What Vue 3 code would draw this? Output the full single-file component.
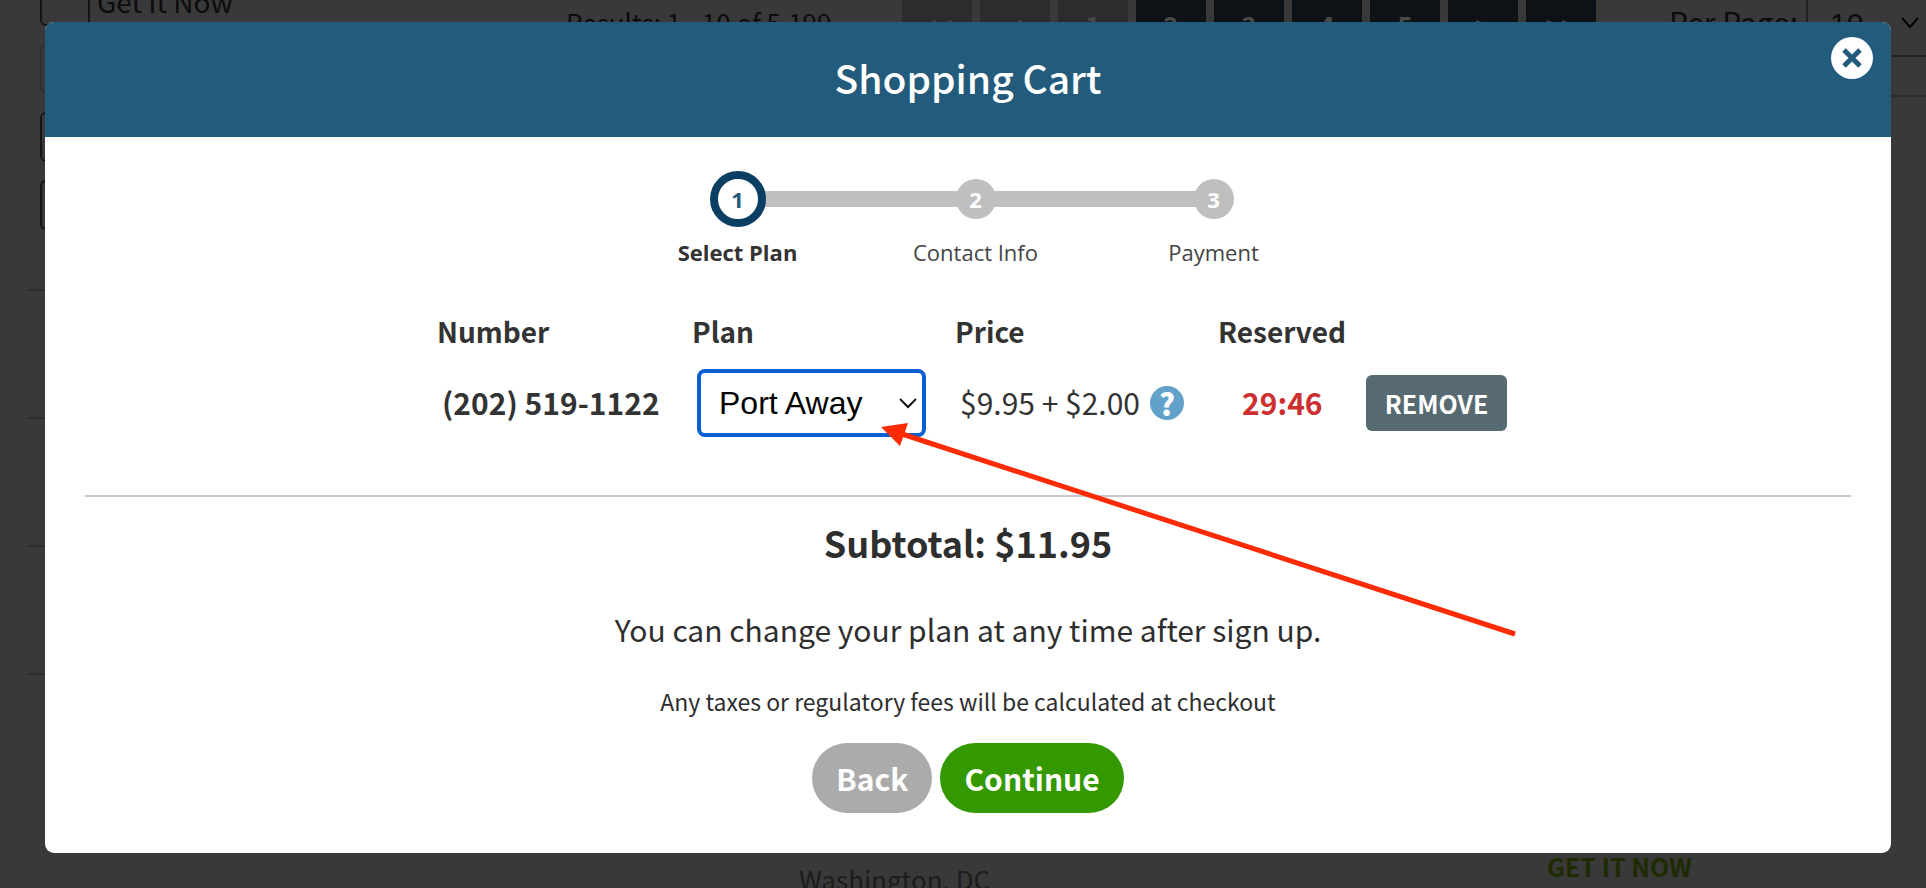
<script setup>
import { ref } from 'vue'

const steps = ['Select Plan', 'Contact Info', 'Payment']
const pages = [
  { label: '<<', off: true },
  { label: '<', off: true },
  { label: '1', off: true },
  { label: '2' },
  { label: '3' },
  { label: '4' },
  { label: '5' },
  { label: '>' },
  { label: '>>' },
]
const filters = ['Area code', 'Digits', 'City']
const plan = ref('Port Away')
const perPage = ref('10')
</script>

<template>
  <div class="page">
    <div class="backdrop">
      <aside class="filters">
        <div class="field split">
          <span class="addon"></span>
          <input type="text" value="Get It Now" aria-label="Search type" />
        </div>
        <input
          v-for="(name, i) in filters"
          :key="name"
          type="text"
          class="field"
          :class="{ faint: i === 0 }"
          :aria-label="name"
        />
        <div class="rules">
          <hr v-for="n in 4" :key="n" />
        </div>
      </aside>
      <main class="results">
        <div class="toolbar">
          <span class="count">Results: 1 - 10 of 5,199</span>
          <nav class="pager">
            <button v-for="p in pages" :key="p.label" type="button" :class="{ off: p.off }">{{ p.label }}</button>
          </nav>
          <div class="per-page">
            <label for="per-page">Per Page:</label>
            <div class="per-box">
              <select id="per-page" v-model="perPage">
                <option>10</option>
              </select>
              <svg width="18" height="12" viewBox="0 0 18 12" aria-hidden="true">
                <path d="M1 1l8 9 8-9" fill="none" stroke="#000" stroke-width="2" />
              </svg>
            </div>
          </div>
        </div>
        <hr class="table-rule" />
        <div class="result">
          <span class="place">Washington, DC</span>
          <a href="#" class="get">GET IT NOW</a>
        </div>
      </main>
    </div>

    <div class="overlay">
      <section class="modal" role="dialog" aria-labelledby="cart-title">
        <header class="modal-head">
          <h1 id="cart-title">Shopping Cart</h1>
          <button type="button" class="close" aria-label="Close">
            <svg width="22" height="22" viewBox="0 0 22 22" aria-hidden="true">
              <path d="M3 3l16 16M19 3L3 19" stroke="#235b7c" stroke-width="5" />
            </svg>
          </button>
        </header>

        <div class="modal-body">
          <ol class="steps">
            <li v-for="(s, i) in steps" :key="s" :class="{ active: i === 0 }">
              <div class="track"><span class="dot">{{ i + 1 }}</span></div>
              <span class="step-label">{{ s }}</span>
            </li>
          </ol>

          <div class="cart">
            <table>
              <colgroup>
                <col class="c-number" /><col class="c-plan" /><col class="c-price" /><col class="c-time" /><col />
              </colgroup>
              <thead>
                <tr>
                  <th>Number</th>
                  <th>Plan</th>
                  <th>Price</th>
                  <th>Reserved</th>
                  <td></td>
                </tr>
              </thead>
              <tbody>
                <tr>
                  <td class="number">(202) 519-1122</td>
                  <td>
                    <div class="plan">
                      <select v-model="plan" aria-label="Plan">
                        <option>Port Away</option>
                      </select>
                      <svg width="18" height="12" viewBox="0 0 18 12" aria-hidden="true">
                        <path d="M1 2l8 8 8-8" fill="none" stroke="#111" stroke-width="2" />
                      </svg>
                    </div>
                  </td>
                  <td>
                    <div class="price">
                      <span>$9.95 + $2.00</span>
                      <button type="button" class="help" aria-label="Price details">?</button>
                    </div>
                  </td>
                  <td class="time">29:46</td>
                  <td><button type="button" class="remove">REMOVE</button></td>
                </tr>
              </tbody>
            </table>
            <svg class="arrow" width="640" height="216" viewBox="0 0 640 216" aria-hidden="true">
              <path d="M20 11L636 212" stroke="#fc2b04" stroke-width="5" />
              <path d="M2 5L29 1 21 24z" fill="#fc2b04" />
            </svg>
          </div>

          <hr class="divider" />
          <p class="subtotal">Subtotal: $11.95</p>
          <p class="note">You can change your plan at any time after sign up.</p>
          <p class="taxes">Any taxes or regulatory fees will be calculated at checkout</p>
          <div class="actions">
            <button type="button" class="back">Back</button>
            <button type="button" class="continue">Continue</button>
          </div>
        </div>
      </section>
    </div>
  </div>
</template>

<style>
body {
  margin: 0;
  background: #393939;
}
</style>

<style scoped>
.page {
  position: relative;
  min-height: 100vh;
  overflow: hidden;
  background: #393939;
  color: #333;
  font-family: "Noto Sans CJK SC", "Noto Sans", sans-serif;
}
button,
select,
input {
  font-family: inherit;
  margin: 0;
  border: 0;
  padding: 0;
}
.backdrop {
  position: absolute;
  inset: 0;
  display: grid;
  grid-template-columns: 486px 1fr;
  color: #0c0c0c;
}
.filters {
  display: flex;
  flex-direction: column;
  gap: 18px;
  padding: 0 27px;
  margin-top: -24px;
}
.field {
  box-sizing: border-box;
  height: 50px;
  margin: 0 13px;
  border: 2px solid #151515;
  border-right: 0;
  border-radius: 6px 0 0 6px;
  background: none;
}
.faint {
  border-color: #2f2f2f;
}
.split {
  display: flex;
  align-items: center;
}
.addon {
  width: 46px;
  height: 100%;
  border-right: 2px solid #151515;
}
.split input {
  flex: 1;
  min-width: 0;
  padding-left: 7px;
  background: none;
  color: #0c0c0c;
  font-size: 28px;
}
.rules {
  display: grid;
  gap: 126px;
  margin-top: 41px;
}
.rules hr,
.table-rule {
  width: 100%;
  margin: 0;
  border: 0;
  border-top: 2px solid #2d2d2d;
}
.results {
  display: flex;
  flex-direction: column;
}
.toolbar {
  display: flex;
  align-items: flex-start;
  padding-left: 80px;
  height: 95px;
}
.count {
  width: 336px;
  padding-top: 4px;
  font-size: 26px;
  line-height: 36px;
}
.pager {
  display: flex;
  gap: 8px;
}
.pager button {
  width: 70px;
  height: 48px;
  background: #0d1216;
  color: #4a4a4a;
  font-size: 26px;
  font-weight: 700;
}
.pager .off {
  background: #2c2c2c;
}
.per-page {
  flex: 1;
  display: flex;
  justify-content: flex-end;
}
.per-page label {
  margin-right: 8px;
  padding-top: 2px;
  font-size: 30px;
  line-height: 38px;
}
.per-box {
  box-sizing: border-box;
  display: flex;
  align-items: center;
  width: 120px;
  height: 66px;
  margin-top: -9px;
  padding-right: 7px;
  border: 2px solid #222;
  border-width: 0 0 2px 2px;
}
.per-box select {
  flex: 1;
  min-width: 0;
  padding-left: 22px;
  appearance: none;
  background: none;
  color: #0c0c0c;
  font-family: "Liberation Sans", Arial, sans-serif;
  font-size: 30px;
}
.result {
  display: flex;
  align-items: flex-start;
  justify-content: space-between;
  margin-top: auto;
  height: 36px;
  padding: 0 234px 0 313px;
  font-size: 25px;
  line-height: 28px;
}
.place {
  padding-top: 13px;
  color: #1c1c1c;
  font-size: 26px;
}
.get {
  color: #1e2b00;
  font-weight: 700;
  text-decoration: none;
}

.overlay {
  position: relative;
  padding: 22px 35px 34px 45px;
}
.modal {
  overflow: hidden;
  border-radius: 9px;
  background: #fff;
}
.modal-head {
  position: relative;
  padding: 26px 0 30px;
  background: #235b7c;
  color: #fff;
  text-align: center;
}
.modal-head h1 {
  margin: 0;
  font-size: 39px;
  font-weight: 500;
  line-height: 59px;
}
.close {
  position: absolute;
  top: 15px;
  right: 18px;
  display: grid;
  place-items: center;
  width: 42px;
  height: 42px;
  border-radius: 50%;
  background: #fff;
}
.modal-body {
  padding: 34px 40px 40px;
  text-align: center;
}
.steps {
  display: flex;
  justify-content: center;
  margin: 0;
  padding: 0 0 0 15px;
  list-style: none;
  font-family: "Open Sans", "Noto Sans", sans-serif;
}
.steps li {
  width: 238px;
}
.track {
  display: flex;
  align-items: center;
  justify-content: center;
  height: 56px;
}
.track::before,
.track::after {
  content: "";
  flex: 1;
  height: 16px;
  margin: 0 -4px 0 0;
  background: #bfbfbf;
}
.track::after {
  margin: 0 0 0 -4px;
}
.steps li:first-child .track::before,
.steps li:last-child .track::after {
  background: none;
}
.dot {
  position: relative;
  z-index: 1;
  display: grid;
  place-items: center;
  width: 40px;
  height: 40px;
  border-radius: 50%;
  background: #bfbfbf;
  color: #fff;
  font-size: 22px;
  font-weight: 700;
}
.active .dot {
  border: 8px solid #0a3f63;
  background: #fff;
  color: #235b7c;
}
.step-label {
  display: block;
  margin-top: 10px;
  font-size: 22px;
  line-height: 30px;
  color: #444;
}
.active .step-label {
  color: #333;
  font-weight: 700;
}
.cart {
  position: relative;
  padding: 44px 0 58px 7px;
}
table {
  width: 1069px;
  margin: 0 auto;
  table-layout: fixed;
  border-collapse: collapse;
  text-align: left;
  font-size: 30px;
  line-height: 40px;
}
.c-number {
  width: 255px;
}
.c-plan,
.c-price {
  width: 263px;
}
.c-time {
  width: 143px;
}
th,
td {
  padding: 0;
  white-space: nowrap;
}
th {
  height: 58px;
  font-size: 28px;
  vertical-align: top;
}
td {
  padding: 0 0 0 5px;
}
.number,
.time {
  padding-bottom: 2px;
  font-weight: 700;
}
.plan {
  display: inline-flex;
  align-items: center;
  box-sizing: border-box;
  width: 229px;
  height: 68px;
  padding-right: 5px;
  border: 4px solid #0b5fd0;
  border-radius: 8px;
  vertical-align: top;
}
.plan select {
  flex: 1;
  min-width: 0;
  height: 100%;
  padding-left: 18px;
  appearance: none;
  background: none;
  outline: 0;
  color: #000;
  font-family: "Liberation Sans", Arial, sans-serif;
  font-size: 32px;
}
.price {
  display: flex;
  align-items: center;
  gap: 10px;
}
.price span {
  padding-bottom: 2px;
}
.help {
  width: 34px;
  height: 34px;
  border-radius: 50%;
  background: #62a1ca;
  color: #fff;
  font-size: 30px;
  font-weight: 900;
  line-height: 34px;
}
.time {
  padding-left: 24px;
  color: #cc2f30;
}
.remove {
  display: block;
  width: 141px;
  height: 56px;
  border-radius: 6px;
  background: #586a71;
  color: #fff;
  font-size: 25px;
  font-weight: 700;
}
.arrow {
  position: absolute;
  top: 155px;
  left: 50%;
  margin-left: -89px;
}
.divider {
  margin: 0;
  border: 0;
  border-top: 2px solid #c8c8c8;
}
.subtotal,
.note,
.taxes {
  margin: 0;
  color: #2e2e2e;
}
.subtotal {
  margin-top: 20px;
  font-size: 36px;
  font-weight: 700;
  line-height: 50px;
}
.note {
  margin-top: 42px;
  font-size: 30px;
  line-height: 40px;
}
.taxes {
  margin-top: 36px;
  font-size: 23px;
  line-height: 32px;
}
.actions {
  display: flex;
  justify-content: center;
  gap: 8px;
  margin-top: 26px;
}
.actions button {
  height: 70px;
  padding: 0 24px;
  border-radius: 35px;
  color: #fff;
  font-size: 30px;
  font-weight: 700;
}
.back {
  background: #ababab;
}
.continue {
  background: #349800;
}
</style>
